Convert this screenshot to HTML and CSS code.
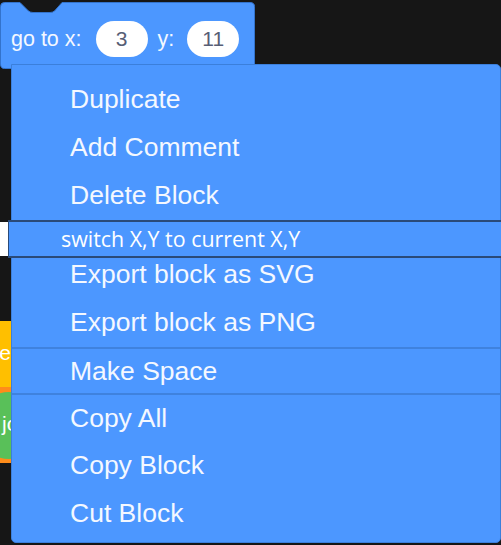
FILE: index.html
```html
<!DOCTYPE html>
<html>
<head>
<meta charset="utf-8">
<link rel="stylesheet" href="styles.css">
</head>
<body>
<div class="stage">
  <div class="block">
    <svg class="block-shape" width="256" height="68" viewBox="0 0 256 68">
      <path d="M0.5,4.5 Q0.5,0.5 4.5,0.5 L20,0.5 L28.5,9 Q30.5,10.5 33,10.5 L50,10.5 Q52.5,10.5 54.5,9 L62,0.5 L250,0.5 Q254.5,0.5 254.5,4.5 L254.5,62 Q254.5,66.5 250,66.5 L4.5,66.5 Q0.5,66.5 0.5,62 Z" fill="#4C97FF" stroke="#3373CC" stroke-width="1"/>
    </svg>
    <div class="block-row">
      <span class="lbl">go to x:</span>
      <span class="oval oval-x">3</span>
      <span class="lbl lbl-y">y:</span>
      <span class="oval">11</span>
    </div>
  </div>

  <div class="side-yellow"><span>re</span></div>
  <div class="side-orange"><div class="side-green"><span>jo</span></div></div>
  <div class="white-strip"></div>

  <div class="menu">
    <div class="item">Duplicate</div>
    <div class="item">Add Comment</div>
    <div class="item">Delete Block</div>
    <div class="switch">switch X,Y to current X,Y</div>
    <div class="item item-short">Export block as SVG</div>
    <div class="item item-tall">Export block as PNG</div>
    <div class="item item-sep item-44">Make Space</div>
    <div class="item item-sep item-46">Copy All</div>
    <div class="item">Copy Block</div>
    <div class="item">Cut Block</div>
  </div>
</div>
</body>
</html>
```

FILE: styles.css
```css
html, body {
  margin: 0;
  padding: 0;
  background: #161616;
  width: 501px;
  height: 545px;
  overflow: hidden;
}

.stage {
  position: relative;
  width: 501px;
  height: 545px;
  font-family: "Liberation Sans", Arial, sans-serif;
}

.block {
  position: absolute;
  left: 0;
  top: 2px;
  width: 256px;
  height: 68px;
}

.block-shape {
  position: absolute;
  left: 0;
  top: 0;
}

.block-row {
  position: relative;
  display: flex;
  align-items: center;
  gap: 12px;
  padding: 4px 0 0 11px;
  box-sizing: border-box;
  height: 70px;
}

.lbl {
  color: #f4f8ff;
  font-size: 21.5px;
}

.lbl-y {
  margin-left: -2px;
  margin-right: 1px;
}

.oval {
  display: flex;
  align-items: center;
  justify-content: center;
  width: 52px;
  height: 36px;
  border-radius: 18px;
  background: #ffffff;
  color: #575E75;
  font-size: 21px;
}

.oval-x {
  margin-left: 2px;
}

.side-yellow {
  position: absolute;
  left: 0;
  top: 321px;
  width: 12px;
  height: 66px;
  background: #FFBF00;
  overflow: hidden;
}

.side-yellow span {
  position: absolute;
  right: 1px;
  top: 20px;
  color: #fff;
  font-size: 21px;
}

.side-orange {
  position: absolute;
  left: 0;
  top: 387px;
  width: 12px;
  height: 76px;
  background: #FF8C1A;
  overflow: hidden;
}

.side-green {
  position: absolute;
  left: -22px;
  top: 5px;
  width: 62px;
  height: 67px;
  border-radius: 34px;
  background: #59C059;
}

.side-green span {
  position: absolute;
  left: 24px;
  top: 20px;
  color: #fff;
  font-size: 21px;
}

.white-strip {
  position: absolute;
  left: 0;
  top: 222px;
  width: 8px;
  height: 34px;
  background: #ffffff;
}

.menu {
  position: absolute;
  left: 11px;
  top: 64px;
  width: 490px;
  height: 479px;
  box-sizing: border-box;
  background: #4C97FF;
  border: 1px solid #3b7fdb;
  border-radius: 0 5px 5px 5px;
  padding-top: 10px;
  display: flex;
  flex-direction: column;
}

.item {
  height: 48px;
  line-height: 48px;
  padding-left: 58px;
  color: #f4f8ff;
  font-size: 26.5px;
  white-space: nowrap;
  flex: none;
}

.item-short {
  height: 40px;
  line-height: 32px;
}

.item-tall {
  height: 49px;
}

.item-sep {
  border-top: 2px solid #3f82de;
}

.item-44 {
  height: 44px;
  line-height: 44px;
}

.item-46 {
  height: 46px;
  line-height: 46px;
}

.switch {
  flex: none;
  margin: 1px -3px 0 -4px;
  height: 34px;
  line-height: 34px;
  border-top: 2px solid #2a4a78;
  border-bottom: 2px solid #2a4a78;
  border-left: 1px solid #2a4a78;
  background: #4C97FF;
  color: #ffffff;
  font-family: "Open Sans", "Noto Sans", sans-serif;
  font-size: 21.4px;
  padding-left: 52px;
  white-space: nowrap;
}
```
